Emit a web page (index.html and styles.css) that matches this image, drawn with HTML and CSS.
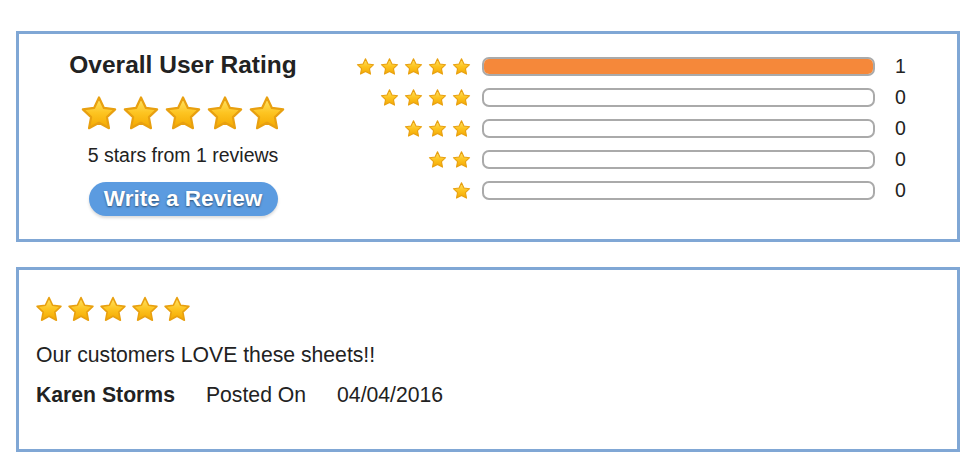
FILE: index.html
```html
<!DOCTYPE html>
<html lang="en">
<head>
    <meta charset="UTF-8">
    <title>Reviews</title>
    <link rel="stylesheet" href="styles.css">
</head>
<body>
    <svg class="defs" width="0" height="0">
        <defs>
            <linearGradient id="gold" x1="0" y1="0" x2="0" y2="1">
                <stop offset="0" stop-color="#ffe66a"/>
                <stop offset="0.5" stop-color="#fdc421"/>
                <stop offset="1" stop-color="#f3a800"/>
            </linearGradient>
            <symbol id="star" viewBox="0 0 24 24">
                <path d="M12 2.2L15.1 8.8L22.2 9.7L17 14.6L18.3 21.6L12 18.2L5.7 21.6L7 14.6L1.8 9.7L8.9 8.8Z" fill="url(#gold)" stroke="#e8a010" stroke-width="1.4" stroke-linejoin="round"/>
            </symbol>
        </defs>
    </svg>

    <section class="summary">
        <div class="overall">
            <h2>Overall User Rating</h2>
            <div class="stars big">
                <svg><use href="#star"/></svg><svg><use href="#star"/></svg><svg><use href="#star"/></svg><svg><use href="#star"/></svg><svg><use href="#star"/></svg>
            </div>
            <p class="from">5 stars from 1 reviews</p>
            <button class="write-review">Write a Review</button>
        </div>
        <div class="breakdown">
            <div class="row">
                <div class="stars small"><svg><use href="#star"/></svg><svg><use href="#star"/></svg><svg><use href="#star"/></svg><svg><use href="#star"/></svg><svg><use href="#star"/></svg></div>
                <div class="bar"><div class="fill" style="width: 100%"></div></div>
                <span class="count">1</span>
            </div>
            <div class="row">
                <div class="stars small"><svg><use href="#star"/></svg><svg><use href="#star"/></svg><svg><use href="#star"/></svg><svg><use href="#star"/></svg></div>
                <div class="bar"></div>
                <span class="count">0</span>
            </div>
            <div class="row">
                <div class="stars small"><svg><use href="#star"/></svg><svg><use href="#star"/></svg><svg><use href="#star"/></svg></div>
                <div class="bar"></div>
                <span class="count">0</span>
            </div>
            <div class="row">
                <div class="stars small"><svg><use href="#star"/></svg><svg><use href="#star"/></svg></div>
                <div class="bar"></div>
                <span class="count">0</span>
            </div>
            <div class="row">
                <div class="stars small"><svg><use href="#star"/></svg></div>
                <div class="bar"></div>
                <span class="count">0</span>
            </div>
        </div>
    </section>

    <section class="review">
        <div class="stars medium">
            <svg><use href="#star"/></svg><svg><use href="#star"/></svg><svg><use href="#star"/></svg><svg><use href="#star"/></svg><svg><use href="#star"/></svg>
        </div>
        <p class="review-text">Our customers LOVE these sheets!!</p>
        <div class="meta">
            <span class="author">Karen Storms</span>
            <span>Posted On</span>
            <span>04/04/2016</span>
        </div>
    </section>
</body>
</html>
```

FILE: styles.css
```css
/* Base */
* {
    margin: 0;
    padding: 0;
    box-sizing: border-box;
}

:root {
    --frame: #80a7d5;
    --text: #222;
    --blue: #5b9be0;
    --orange: #f5883a;
}

body {
    font-family: "Liberation Sans", Arial, sans-serif;
    color: var(--text);
    background: #fff;
    padding: 31px 9px 0 16px;
}

.defs {
    position: absolute;
}

/* Stars */
.stars {
    display: flex;
}

.stars svg {
    display: block;
}

.stars.big {
    gap: 4px;
    justify-content: center;
}

.stars.big svg {
    width: 38px;
    height: 38px;
}

.stars.small {
    gap: 5px;
    justify-content: flex-end;
}

.stars.small svg {
    width: 19px;
    height: 19px;
}

.stars.medium {
    gap: 4px;
    margin-left: -1px;
}

.stars.medium svg {
    width: 28px;
    height: 28px;
}

/* Summary box */
.summary {
    display: flex;
    height: 211px;
    border: 3px solid var(--frame);
}

.overall {
    width: 328px;
    padding-top: 16px;
    display: flex;
    flex-direction: column;
    align-items: center;
}

.overall h2 {
    font-size: 24.5px;
    line-height: 30px;
    font-weight: bold;
}

.overall .stars {
    margin-top: 14px;
}

.from {
    margin-top: 11px;
    font-size: 19.5px;
    line-height: 24px;
}

.write-review {
    margin-top: 15px;
    width: 189px;
    height: 34px;
    border: none;
    border-radius: 17px;
    background: var(--blue);
    color: #fff;
    font-family: inherit;
    font-size: 22.5px;
    font-weight: bold;
    text-shadow: 0 1px 2px rgba(0, 0, 0, 0.5);
    box-shadow: 0 2px 3px rgba(0, 0, 0, 0.15);
    cursor: pointer;
}

.breakdown {
    padding-top: 17px;
}

.row {
    display: flex;
    align-items: center;
    height: 31px;
}

.row .stars {
    width: 124px;
}

.bar {
    margin-left: 11px;
    width: 393px;
    height: 19px;
    border: 2px solid #aaa;
    border-radius: 7px;
    overflow: hidden;
    background: #fff;
}

.fill {
    height: 100%;
    background: var(--orange);
}

.count {
    margin-left: 20px;
    font-size: 19.5px;
}

/* Review box */
.review {
    margin-top: 25px;
    height: 185px;
    border: 3px solid var(--frame);
    padding: 25px 17px 0;
}

.review-text {
    margin-top: 19px;
    font-size: 21.2px;
    line-height: 25px;
}

.meta {
    margin-top: 15px;
    display: flex;
    gap: 31px;
    font-size: 21.2px;
    line-height: 25px;
}

.author {
    font-weight: bold;
}
```
